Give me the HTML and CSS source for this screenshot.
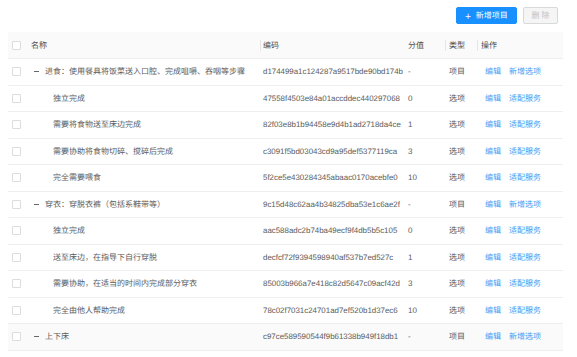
FILE: index.html
```html
<!DOCTYPE html>
<html lang="zh-CN">
<head>
<meta charset="utf-8">
<link rel="stylesheet" href="styles.css">
</head>
<body>
<div class="page">
  <div class="toolbar">
    <button class="btn btn-primary"><span class="plus">+</span>新增项目</button>
    <button class="btn btn-disabled">删 除</button>
  </div>
  <div class="table">
    <div class="row head">
      <div class="cell c-check"><span class="cb"></span></div>
      <div class="cell c-name">名称</div>
      <div class="cell c-code sep">编码</div>
      <div class="cell c-score">分值</div>
      <div class="cell c-type sep">类型</div>
      <div class="cell c-op sep">操作</div>
    </div>

    <div class="row">
      <div class="cell c-check"><span class="cb"></span></div>
      <div class="cell c-name parent"><span class="minus"></span>进食：使用餐具将饭菜送入口腔、完成咀嚼、吞咽等步骤</div>
      <div class="cell c-code">d174499a1c124287a9517bde90bd174b</div>
      <div class="cell c-score">-</div>
      <div class="cell c-type">项目</div>
      <div class="cell c-op"><a>编辑</a><a>新增选项</a></div>
    </div>
    <div class="row">
      <div class="cell c-check"><span class="cb"></span></div>
      <div class="cell c-name child">独立完成</div>
      <div class="cell c-code">47558f4503e84a01accddec440297068</div>
      <div class="cell c-score">0</div>
      <div class="cell c-type">选项</div>
      <div class="cell c-op"><a>编辑</a><a>适配服务</a></div>
    </div>
    <div class="row">
      <div class="cell c-check"><span class="cb"></span></div>
      <div class="cell c-name child">需要将食物送至床边完成</div>
      <div class="cell c-code">82f03e8b1b94458e9d4b1ad2718da4ce</div>
      <div class="cell c-score">1</div>
      <div class="cell c-type">选项</div>
      <div class="cell c-op"><a>编辑</a><a>适配服务</a></div>
    </div>
    <div class="row">
      <div class="cell c-check"><span class="cb"></span></div>
      <div class="cell c-name child">需要协助将食物切碎、搅碎后完成</div>
      <div class="cell c-code">c3091f5bd03043cd9a95def5377119ca</div>
      <div class="cell c-score">3</div>
      <div class="cell c-type">选项</div>
      <div class="cell c-op"><a>编辑</a><a>适配服务</a></div>
    </div>
    <div class="row">
      <div class="cell c-check"><span class="cb"></span></div>
      <div class="cell c-name child">完全需要喂食</div>
      <div class="cell c-code">5f2ce5e430284345abaac0170acebfe0</div>
      <div class="cell c-score">10</div>
      <div class="cell c-type">选项</div>
      <div class="cell c-op"><a>编辑</a><a>适配服务</a></div>
    </div>
    <div class="row">
      <div class="cell c-check"><span class="cb"></span></div>
      <div class="cell c-name parent"><span class="minus"></span>穿衣：穿脱衣裤（包括系鞋带等）</div>
      <div class="cell c-code">9c15d48c62aa4b34825dba53e1c6ae2f</div>
      <div class="cell c-score">-</div>
      <div class="cell c-type">项目</div>
      <div class="cell c-op"><a>编辑</a><a>新增选项</a></div>
    </div>
    <div class="row">
      <div class="cell c-check"><span class="cb"></span></div>
      <div class="cell c-name child">独立完成</div>
      <div class="cell c-code">aac588adc2b74ba49ecf9f4db5b5c105</div>
      <div class="cell c-score">0</div>
      <div class="cell c-type">选项</div>
      <div class="cell c-op"><a>编辑</a><a>适配服务</a></div>
    </div>
    <div class="row">
      <div class="cell c-check"><span class="cb"></span></div>
      <div class="cell c-name child">送至床边，在指导下自行穿脱</div>
      <div class="cell c-code">decfcf72f9394598940af537b7ed527c</div>
      <div class="cell c-score">1</div>
      <div class="cell c-type">选项</div>
      <div class="cell c-op"><a>编辑</a><a>适配服务</a></div>
    </div>
    <div class="row">
      <div class="cell c-check"><span class="cb"></span></div>
      <div class="cell c-name child">需要协助，在适当的时间内完成部分穿衣</div>
      <div class="cell c-code">85003b966a7e418c82d5647c09acf42d</div>
      <div class="cell c-score">3</div>
      <div class="cell c-type">选项</div>
      <div class="cell c-op"><a>编辑</a><a>适配服务</a></div>
    </div>
    <div class="row">
      <div class="cell c-check"><span class="cb"></span></div>
      <div class="cell c-name child">完全由他人帮助完成</div>
      <div class="cell c-code">78c02f7031c24701ad7ef520b1d37ec6</div>
      <div class="cell c-score">10</div>
      <div class="cell c-type">选项</div>
      <div class="cell c-op"><a>编辑</a><a>适配服务</a></div>
    </div>
    <div class="row hover">
      <div class="cell c-check"><span class="cb"></span></div>
      <div class="cell c-name parent"><span class="minus"></span>上下床</div>
      <div class="cell c-code">c97ce589590544f9b61338b949f18db1</div>
      <div class="cell c-score">-</div>
      <div class="cell c-type">项目</div>
      <div class="cell c-op"><a>编辑</a><a>新增选项</a></div>
    </div>
  </div>
</div>
</body>
</html>
```

FILE: styles.css
```css
html, body {
  margin: 0;
  padding: 0;
  background: #ffffff;
}
body {
  font-family: "Liberation Sans", "Noto Sans CJK SC", sans-serif;
  font-size: 8px;
  color: #5a5a5a;
  text-rendering: geometricPrecision;
}
.page {
  width: 555px;
  margin-left: 8px;
  padding-top: 7px;
}
.toolbar {
  display: flex;
  justify-content: flex-end;
  gap: 6px;
  padding-right: 5px;
  height: 17px;
  margin-bottom: 8px;
}
.btn {
  font-family: "Noto Sans CJK SC", sans-serif;
  font-size: 8px;
  height: 17px;
  padding: 0;
  border-radius: 2px;
  display: flex;
  align-items: center;
  justify-content: center;
  text-rendering: geometricPrecision;
}
.btn-primary {
  width: 61px;
  background: #1890ff;
  border: 1px solid #1890ff;
  color: #ffffff;
}
.plus {
  font-size: 10px;
  margin-right: 5px;
  line-height: 1;
}
.btn-disabled {
  width: 35px;
  background: #f5f5f5;
  border: 1px solid #d9d9d9;
  color: #bfbfbf;
}
.table {
  display: flex;
  flex-direction: column;
}
.row {
  display: grid;
  grid-template-columns: 19px 233px 144px 41px 32px 86px;
  height: 26.5px;
  box-sizing: border-box;
  border-bottom: 1px solid #eeeeee;
  align-items: center;
}
.row.head {
  height: 27px;
  background: #fafafa;
  color: #4a4a4a;
}
.row.hover {
  background: #fafafa;
}
.cell {
  position: relative;
  padding-left: 4px;
  white-space: nowrap;
  overflow: hidden;
  font-family: "Noto Sans CJK SC", sans-serif;
  display: flex;
  align-items: center;
  height: 100%;
}
.c-code {
  font-family: "Liberation Sans", "Noto Sans CJK SC", sans-serif;
  font-size: 7.9px;
  padding-left: 3px;
}
.c-score {
  font-family: "Liberation Sans", "Noto Sans CJK SC", sans-serif;
  font-size: 8px;
}
.sep::before {
  content: "";
  position: absolute;
  left: 0;
  top: 8px;
  width: 1px;
  height: 11px;
  background: #e6e6e6;
}
.c-check {
  padding-left: 4px;
}
.cb {
  width: 9px;
  height: 9px;
  box-sizing: border-box;
  border: 1px solid #dcdcdc;
  border-radius: 1px;
  background: #ffffff;
  display: block;
}
.c-name.parent {
  padding-left: 7px;
}
.minus {
  width: 5px;
  height: 1px;
  background: #666666;
  margin-right: 6px;
}
.c-name.child {
  padding-left: 26px;
}
.c-op {
  padding-left: 8px;
  gap: 8px;
}
.head .c-op {
  padding-left: 4px;
}
.c-op a {
  color: #3f9cf5;
  cursor: pointer;
}
```
